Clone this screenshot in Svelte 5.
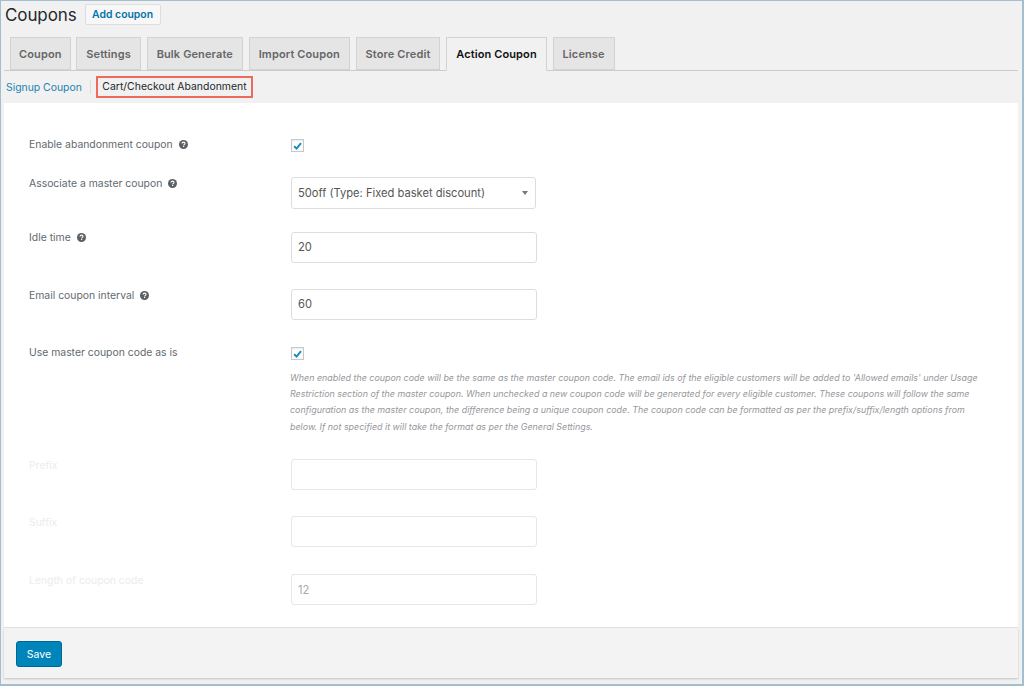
<script>
  const tabs = ['Coupon', 'Settings', 'Bulk Generate', 'Import Coupon', 'Store Credit', 'Action Coupon', 'License'];
  const activeTab = 'Action Coupon';
</script>

<div class="frame">
  <div class="heading">
    <h1>Coupons</h1>
    <a class="add-btn" href="#add">Add coupon</a>
  </div>

  <nav class="tabs">
    {#each tabs as tab}
      <a class="tab" class:active={tab === activeTab} href="#tab">{tab}</a>
    {/each}
  </nav>

  <div class="subnav">
    <a class="sublink" href="#signup">Signup Coupon</a>
    <span class="sep"></span>
    <span class="current">Cart/Checkout Abandonment</span>
  </div>

  <section class="card">
    <div class="row r-enable">
      <div class="label">Enable abandonment coupon {@render help()}</div>
      {@render check()}
    </div>

    <div class="row r-master">
      <div class="label">Associate a master coupon {@render help()}</div>
      <div class="select">
        <span>50off (Type: Fixed basket discount)</span>
        <i class="caret"></i>
      </div>
    </div>

    <div class="row r-idle">
      <div class="label">Idle time {@render help()}</div>
      <div class="input">20</div>
    </div>

    <div class="row r-interval">
      <div class="label">Email coupon interval {@render help()}</div>
      <div class="input">60</div>
    </div>

    <div class="row r-asis">
      <div class="label">Use master coupon code as is</div>
      <div>
        {@render check()}
        <p class="desc">
          When enabled the coupon code will be the same as the master coupon code. The email ids of the eligible customers will be added to 'Allowed emails' under Usage<br />
          Restriction section of the master coupon. When unchecked a new coupon code will be generated for every eligible customer. These coupons will follow the same<br />
          configuration as the master coupon, the difference being a unique coupon code. The coupon code can be formatted as per the prefix/suffix/length options from<br />
          below. If not specified it will take the format as per the General Settings.
        </p>
      </div>
    </div>

    <div class="row r-prefix muted">
      <div class="label">Prefix</div>
      <div class="input"></div>
    </div>

    <div class="row r-suffix muted">
      <div class="label">Suffix</div>
      <div class="input"></div>
    </div>

    <div class="row r-length muted">
      <div class="label">Length of coupon code</div>
      <div class="input">12</div>
    </div>
  </section>

  <footer class="foot">
    <button class="save">Save</button>
  </footer>
</div>

{#snippet help()}
  <svg class="help" viewBox="0 0 10 10" width="9" height="9" aria-hidden="true">
    <circle cx="5" cy="5" r="5" fill="#5a6064" />
    <path d="M3.3 3.9C3.4 2.9 4.1 2.4 5 2.4C6 2.4 6.7 3 6.7 3.8C6.7 4.9 5.2 4.9 5.2 6" fill="none" stroke="#fff" stroke-width="1.2" />
    <rect x="4.5" y="6.6" width="1.3" height="1.2" fill="#fff" />
  </svg>
{/snippet}

{#snippet check()}
  <span class="checkbox">
    <svg viewBox="0 0 12 12" width="12" height="12" aria-hidden="true">
      <path d="M2.4 6.2L5 8.8L9.8 2.9" fill="none" stroke="#1e8cbe" stroke-width="2.2" />
    </svg>
  </span>
{/snippet}

<style>
  :global(body) {
    margin: 0;
    background: #f1f1f1;
  }

  .frame {
    box-sizing: border-box;
    width: 1024px;
    height: 686px;
    padding: 3px 4px 0 3px;
    border: 1px solid #a3bfcf;
    border-width: 1px 2px 2px 1px;
    background: #f1f1f1;
    font-family: Inter, "Liberation Sans", sans-serif;
    font-size: 10.4px;
    color: #62696f;
    overflow: hidden;
  }

  .heading {
    display: flex;
    align-items: center;
    gap: 8px;
    height: 21px;
    padding-left: 1px;
  }

  h1 {
    margin: 0;
    font-size: 17px;
    font-weight: 400;
    color: #23282d;
    letter-spacing: -0.1px;
  }

  .add-btn {
    box-sizing: border-box;
    height: 21px;
    line-height: 19px;
    padding: 0 6.5px;
    border: 1px solid #ddd;
    border-radius: 2px;
    background: #f7f7f7;
    color: #0073aa;
    font-weight: 600;
    text-decoration: none;
    white-space: nowrap;
  }

  .tabs {
    display: flex;
    gap: 5.75px;
    height: 33px;
    margin-top: 12px;
    padding-left: 6px;
    border-bottom: 1px solid #ccc;
  }

  .tab {
    box-sizing: border-box;
    height: 33px;
    padding: 0 9px;
    line-height: 32px;
    border: 1px solid #d2d2d2;
    background: #e5e5e5;
    color: #666;
    font-size: 11px;
    font-weight: 600;
    letter-spacing: 0.12px;
    text-decoration: none;
    white-space: nowrap;
  }

  .tab:first-child {
    padding: 0 8px;
  }

  .tab.active {
    height: 34px;
    background: #f1f1f1;
    border-bottom-color: #f1f1f1;
    color: #111;
  }

  .subnav {
    display: flex;
    align-items: center;
    height: 32px;
    padding-left: 2px;
  }

  .sublink {
    color: #1b82b3;
    text-decoration: none;
  }

  .sep {
    width: 1px;
    height: 14px;
    margin: 0 5px 0 8px;
    background: #ddd;
  }

  .current {
    box-sizing: border-box;
    height: 22px;
    line-height: 18px;
    padding: 0 4.5px;
    border: 2px solid #ec6a5e;
    color: #23282d;
    letter-spacing: 0.03px;
    white-space: nowrap;
  }

  .card {
    box-sizing: border-box;
    height: 525px;
    padding: 0 25px;
    background: #fff;
    border-bottom: 1px solid #e2e2e2;
  }

  .row {
    display: grid;
    grid-template-columns: 262px 1fr;
    align-items: start;
  }

  .r-enable { padding-top: 36px; }
  .r-master { padding-top: 25px; }
  .r-idle { padding-top: 23px; }
  .r-interval { padding-top: 26px; }
  .r-asis { padding-top: 27px; }
  .r-prefix { padding-top: 24px; }
  .r-suffix { padding-top: 26px; }
  .r-length { padding-top: 27px; }

  .label {
    line-height: 12px;
    white-space: nowrap;
  }

  .r-master .label { margin-top: 1px; }
  .r-interval .label { margin-top: 1px; }

  .help {
    margin-left: 3px;
    vertical-align: -0.5px;
  }

  .muted .label {
    color: #ececec;
    margin-top: 1px;
  }

  .checkbox {
    box-sizing: border-box;
    display: flex;
    align-items: center;
    justify-content: center;
    width: 13px;
    height: 13px;
    border: 1px solid #c8c8c8;
    background: #fff;
    box-shadow: inset 0 1px 2px rgba(0, 0, 0, 0.08);
  }

  .select,
  .input {
    box-sizing: border-box;
    width: 246px;
    height: 31px;
    padding: 0 6px;
    border: 1px solid #ddd;
    border-radius: 3px;
    background: #fff;
    color: #555;
    font-size: 11.15px;
    line-height: 29px;
  }

  .select {
    display: flex;
    align-items: center;
    justify-content: space-between;
    width: 245px;
    height: 32px;
    padding-top: 1px;
  }

  .caret {
    margin: 0 1px 2px 0;
    border: 3.5px solid transparent;
    border-top: 4px solid #777;
    border-bottom: 0;
  }

  .muted .input {
    border-color: #e6e6e6;
    color: #aaa;
    line-height: 31px;
  }

  .desc {
    margin: 10px 0 0 -1px;
    width: 700px;
    font-size: 8.92px;
    font-style: italic;
    line-height: 16.2px;
    color: #97979c;
    white-space: nowrap;
  }

  .foot {
    box-sizing: border-box;
    height: 50px;
    padding: 13px 12px;
    background: #f3f3f3;
    box-shadow: 0 1px 2px rgba(0, 0, 0, 0.2);
  }

  .save {
    display: block;
    width: 46px;
    height: 26px;
    padding: 0;
    border: 1px solid #006799;
    border-radius: 3px;
    background: #0085ba;
    color: #fff;
    font-family: inherit;
    font-size: 10.5px;
  }
</style>
